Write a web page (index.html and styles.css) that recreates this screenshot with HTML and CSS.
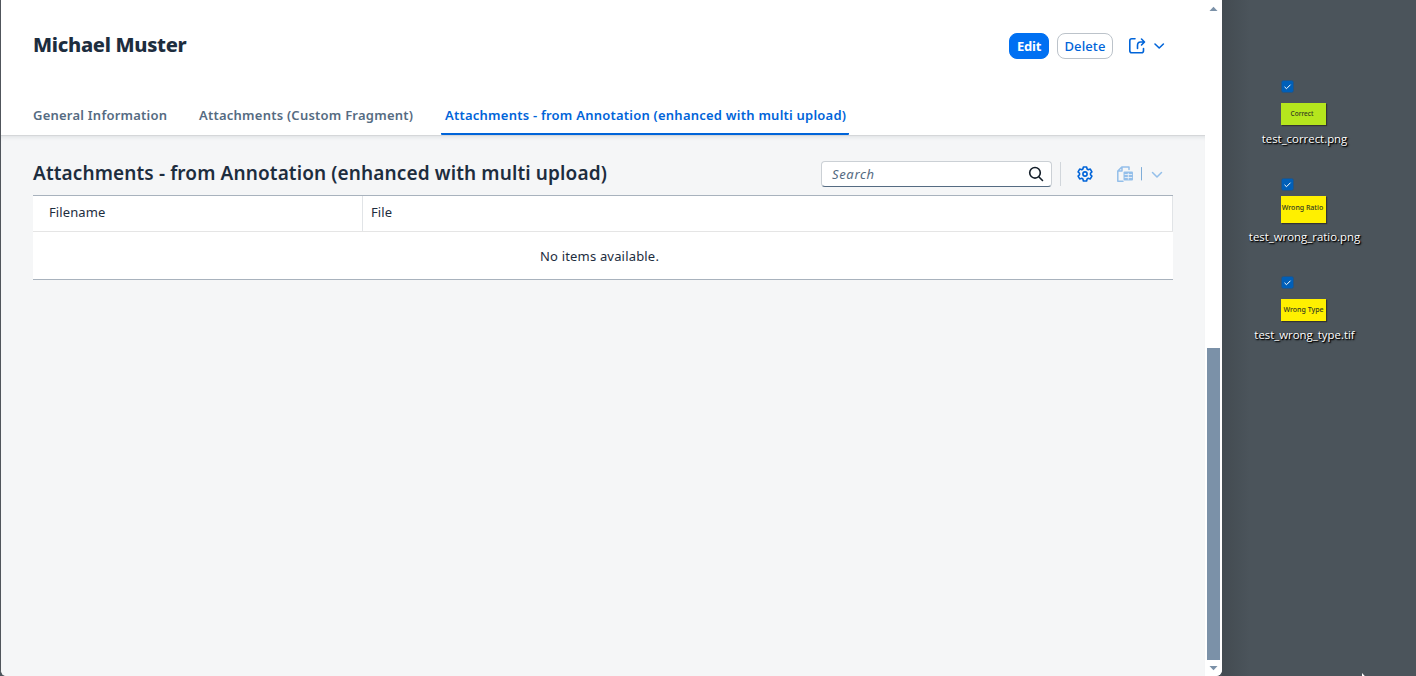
FILE: index.html
```html
<!DOCTYPE html>
<html lang="en">
<head>
<meta charset="utf-8">
<title>Michael Muster</title>
<link rel="stylesheet" href="styles.css">
</head>
<body>
<div class="screen">
  <div class="window">
    <main class="page">
      <header class="header">
        <div class="title-row">
          <h1 class="title">Michael Muster</h1>
          <div class="actions">
            <button class="btn btn-primary">Edit</button>
            <button class="btn btn-secondary">Delete</button>
            <svg class="share" width="40" height="20" viewBox="0 0 40 20" fill="none" stroke="#0064d9" stroke-width="1.6" stroke-linecap="round" stroke-linejoin="round">
              <path d="M8 2.800H4.800Q2.800 2.800 2.800 4.800V14.700Q2.800 16.700 4.800 16.700H14.500Q16.500 16.700 16.500 14.700V12.500"/>
              <path d="M10.500 12.500V9.500Q10.500 6 13.500 6H17M14.500 3L17.500 6L14.500 9"/>
              <path d="M28 8L32.200 12L36.400 8"/>
            </svg>
          </div>
        </div>
        <nav class="tabs">
          <a class="tab tab-general">General Information</a>
          <a class="tab tab-custom">Attachments (Custom Fragment)</a>
          <a class="tab tab-active">Attachments - from Annotation (enhanced with multi upload)</a>
        </nav>
      </header>
      <section class="content">
        <div class="toolbar">
          <h2 class="section-title">Attachments - from Annotation (enhanced with multi upload)</h2>
          <div class="search">
            <span class="placeholder">Search</span>
            <svg width="16" height="16" viewBox="0 0 16 16" fill="none" stroke="#131e29" stroke-width="1.6" stroke-linecap="round"><circle cx="7" cy="6.800" r="5.300"/><path d="M11 11L14.500 14.500"/></svg>
          </div>
          <span class="separator"></span>
          <svg class="gear" width="16" height="16" viewBox="0 0 16 16" fill="none" stroke="#0064d9" stroke-width="1.600" stroke-linejoin="round"><path d="M6.400 1H9.600L10.100 3L11.300 3.700L13.300 3.100L14.900 5.900L13.500 7.300V8.700L14.900 10.100L13.300 12.900L11.300 12.300L10.100 13L9.600 15H6.400L5.900 13L4.700 12.300L2.700 12.900L1.100 10.100L2.500 8.700V7.300L1.100 5.900L2.700 3.100L4.700 3.700L5.900 3Z"/><circle cx="8" cy="8" r="2.100"/></svg>
          <svg class="export" width="48" height="18" viewBox="0 0 48 18" fill="none" stroke="#94bfea" stroke-width="1.500" stroke-linejoin="round" stroke-linecap="round">
            <path d="M7 16.200H1.800V6L5.800 2H13V4.500M6 2.500V6H2.500"/>
            <rect x="7.500" y="6.500" width="9.500" height="9" rx="1" fill="#94bfea" stroke="none"/>
            <path d="M9 9.500H15.800M9 12.500H15.800M12.300 8.300V14.200" stroke="#f5f6f7" stroke-width=".8"/>
            <path d="M25.500 2.500V15" stroke-width="1" stroke="#7fadd8"/>
            <path d="M36.500 7.500L41 12L45.500 7.500"/>
          </svg>
        </div>
        <div class="table">
          <div class="row head"><div class="cell name">Filename</div><div class="cell file">File</div></div>
          <div class="row empty"><span>No items available.</span></div>
        </div>
      </section>
    </main>
    <div class="scrollbar">
      <svg width="9" height="5" viewBox="0 0 9 5"><path d="M.5 5L4.500 .8L8.500 5Z" fill="#7b91a8"/></svg>
      <div class="thumb"></div>
      <svg width="9" height="5" viewBox="0 0 9 5"><path d="M.5 0L4.500 4.200L8.500 0Z" fill="#7b91a8"/></svg>
    </div>
  </div>
  <aside class="desktop">
    <div class="item">
      <svg class="check" width="13" height="13" viewBox="0 0 13 13"><rect x=".5" y=".5" width="12" height="12" rx="2" fill="#005fb8" stroke="#28547f"/><path d="M3.500 6.800L5.500 8.700L9.500 4.700" fill="none" stroke="#fff"/></svg>
      <div class="preview"><div class="thumbnail green"><span>Correct</span></div></div>
      <div class="label"><span>test_correct.png</span></div>
    </div>
    <div class="item">
      <svg class="check" width="13" height="13" viewBox="0 0 13 13"><rect x=".5" y=".5" width="12" height="12" rx="2" fill="#005fb8" stroke="#28547f"/><path d="M3.500 6.800L5.500 8.700L9.500 4.700" fill="none" stroke="#fff"/></svg>
      <div class="preview"><div class="thumbnail tall"><span>Wrong Ratio</span></div></div>
      <div class="label"><span>test_wrong_ratio.png</span></div>
    </div>
    <div class="item">
      <svg class="check" width="13" height="13" viewBox="0 0 13 13"><rect x=".5" y=".5" width="12" height="12" rx="2" fill="#005fb8" stroke="#28547f"/><path d="M3.500 6.800L5.500 8.700L9.500 4.700" fill="none" stroke="#fff"/></svg>
      <div class="preview"><div class="thumbnail wide"><span>Wrong Type</span></div></div>
      <div class="label"><span>test_wrong_type.tif</span></div>
    </div>
  </aside>
  <svg class="cursor" width="8" height="12" viewBox="0 0 8 12"><path d="M0 0V10L3 7.500H7Z" fill="#fff"/></svg>
</div>
</body>
</html>
```
FILE: styles.css
```css
* { box-sizing: border-box; }
body { margin: 0; font-family: "Noto Sans", "Open Sans", sans-serif; color: #1d2d3e; }
h1, h2 { margin: 0; }
svg { display: block; flex: none; }
.screen { position: relative; display: flex; width: 1416px; height: 676px; background: #4b545b; overflow: hidden; }
.window { display: flex; width: 1222px; height: 676px; background: #fff; border-left: 1px solid #50555b; border-radius: 0 0 6px 6px; overflow: hidden; flex: none; }
.page { width: 1204px; display: flex; flex-direction: column; }
.header { height: 136px; border-bottom: 1px solid #d5d7d9; flex: none; }
.title-row { display: flex; justify-content: space-between; height: 95px; padding: 33px 38px 0 32px; }
.title { font-size: 20px; line-height: 24px; font-weight: 800; letter-spacing: -.28px; white-space: nowrap; }
.actions { display: flex; align-items: flex-start; }
.btn { height: 26px; padding: 0; border-radius: 8px; font-family: "Noto Sans", sans-serif; font-size: 13px; line-height: 24px; }
.btn-primary { width: 40px; background: #0070f2; border: 1px solid #0070f2; color: #fff; font-weight: 700; letter-spacing: -.2px; }
.btn-secondary { width: 56px; margin-left: 8px; background: #fff; border: 1px solid #bcc3ca; color: #0064d9; font-weight: 500; letter-spacing: .1px; }
.share { margin: 3px 0 0 14px; }
.tabs { display: flex; height: 40px; padding-left: 32px; white-space: nowrap; }
.tab { font-size: 13px; line-height: 20px; letter-spacing: .23px; padding-top: 10px; height: 40px; font-weight: 600; color: #556b82; }
.tab-general { width: 165px; }
.tab-custom { width: 243px; padding-left: 1px; }
.tab-active { width: 408px; padding-left: 4px; color: #0064d9; border-bottom: 2px solid #0064d9; border-radius: 1px; }
.content { flex: 1; background: #f5f6f7; padding: 24px 32px 0; box-shadow: inset 0 4px 4px -3px #dcdfe2; }
.toolbar { display: flex; height: 35px; }
.section-title { width: 788px; flex: none; font-size: 19px; line-height: 26px; letter-spacing: .12px; font-weight: 600; white-space: nowrap; }
.search { width: 231px; height: 26px; margin-top: 1px; padding: 0 7px 0 10px; display: flex; justify-content: space-between; align-items: center; background: #fff; border: 1px solid #cbd0d5; border-bottom-color: #556b82; border-radius: 4px; flex: none; }
.placeholder { font: italic 13px/24px "Noto Sans", sans-serif; letter-spacing: .65px; color: #556b82; }
.separator { width: 1px; height: 24px; margin: 2px 17px 0 8px; background: #d1d6db; }
.gear { margin: 6px 0 0 -1px; }
.export { margin: 5px 0 0 23px; }
.table { width: 1140px; background: #fff; border-top: 1px solid #a8b2bd; border-bottom: 1px solid #a8b2bd; font-size: 13px; }
.row { display: flex; }
.head { height: 35px; border-right: 1px solid #e1e4e7; line-height: 33px; letter-spacing: .1px; }
.name { width: 330px; padding-left: 16px; border-right: 1px solid #e1e4e7; }
.file { padding-left: 8px; }
.empty { height: 48px; border-top: 1px solid #e5e5e5; align-items: center; padding-left: 507px; letter-spacing: .18px; }
.scrollbar { width: 17px; padding: 6px 0 5px 2px; display: flex; flex-direction: column; background: #fff; }
.scrollbar svg { margin-left: 2px; }
.thumb { width: 13px; height: 312px; margin: 337px 0 6px; background: #7b91a8; flex: none; }
.desktop { width: 194px; padding-top: 80px; background: linear-gradient(90deg, #434b51, #4b545b 28px); }
.item { height: 98px; width: 165px; }
.check { margin-left: 59px; }
.preview { height: 37px; display: flex; align-items: flex-end; padding-bottom: 5px; margin: 0 0 0 59px; }
.thumbnail { width: 45px; height: 22px; padding-bottom: 1px; background: #fff000; color: #333a20; display: flex; align-items: center; justify-content: center; font-size: 7px; line-height: 10px; font-weight: 500; white-space: nowrap; box-shadow: 1px 1px 1px #333; }
.thumbnail.green { background: #b5e61d; padding-right: 3px; font-size: 6.5px; }
.thumbnail.tall { height: 27px; padding-bottom: 3px; padding-right: 2px; }
.label { display: flex; justify-content: center; font: 11.4px/17px "Open Sans", sans-serif; color: #fff; text-shadow: 1px 1px 2px #000, 1px 1px 1px #000; white-space: nowrap; }
.cursor { position: absolute; left: 1362px; top: 673px; }
```
